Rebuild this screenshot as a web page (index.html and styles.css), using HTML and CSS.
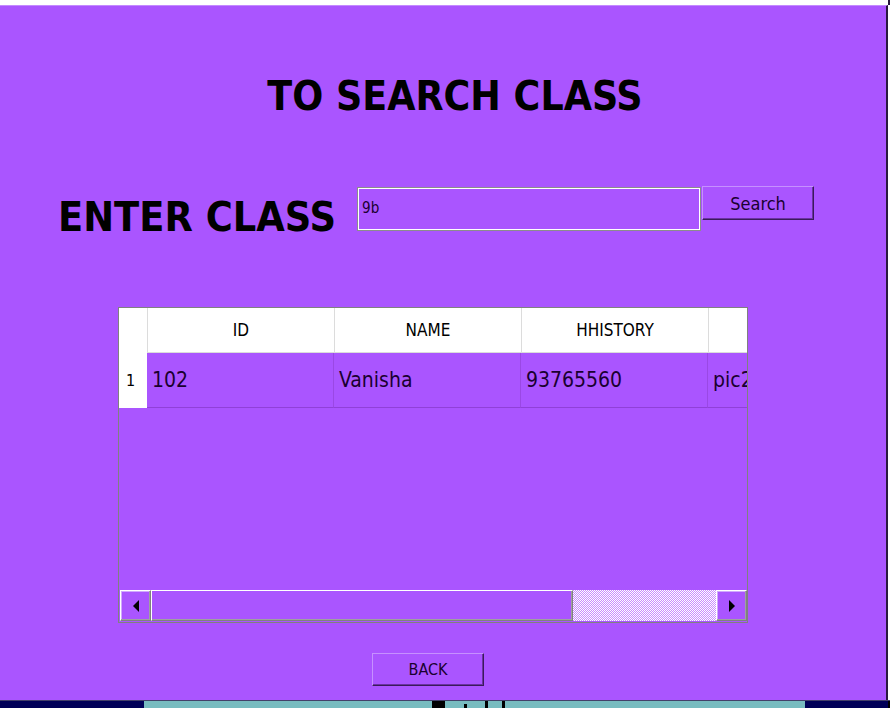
FILE: index.html
```html
<!DOCTYPE html>
<html>
<head>
<meta charset="utf-8">
<link rel="stylesheet" href="styles.css">
</head>
<body>
<div class="screen">
  <div class="topstrip"></div>
  <div class="window">
    <h1 class="title">TO SEARCH CLASS</h1>
    <div class="search-row">
      <label class="label">ENTER CLASS</label>
      <div class="input">9b</div>
      <button class="btn search-btn">Search</button>
    </div>
    <div class="table-frame">
      <div class="table-view">
        <div class="thead">
          <div class="corner"></div>
          <div class="th">ID</div>
          <div class="th">NAME</div>
          <div class="th">HHISTORY</div>
          <div class="th"></div>
        </div>
        <div class="trow">
          <div class="rownum">1</div>
          <div class="td">102</div>
          <div class="td">Vanisha</div>
          <div class="td">93765560</div>
          <div class="td">pic2</div>
        </div>
        <div class="empty">
          <div class="empty-gutter"></div>
        </div>
      </div>
      <div class="hscroll">
        <div class="sb-btn"><svg width="8" height="12" viewBox="0 0 8 12"><path d="M7 0 L1 6 L7 12 Z" fill="#000"/></svg></div>
        <div class="sb-thumb"></div>
        <div class="sb-track"></div>
        <div class="sb-btn"><svg width="8" height="12" viewBox="0 0 8 12"><path d="M1 0 L7 6 L1 12 Z" fill="#000"/></svg></div>
      </div>
    </div>
    <div class="back-row">
      <button class="btn back-btn">BACK</button>
    </div>
  </div>
  <div class="bottomstrip">
    <div class="navy left"></div>
    <div class="teal">
      <span class="mark m1"></span>
      <span class="mark m2"></span>
      <span class="mark m3"></span>
      <span class="mark m4"></span>
    </div>
    <div class="navy right"></div>
  </div>
</div>
</body>
</html>
```
FILE: styles.css
```css
html, body {
  margin: 0;
  padding: 0;
  background: #ffffff;
}
body {
  font-family: "DejaVu Sans Condensed", "DejaVu Sans", sans-serif;
  font-stretch: condensed;
  width: 890px;
  height: 708px;
  overflow: hidden;
}
.screen {
  display: flex;
  flex-direction: column;
  width: 890px;
  height: 708px;
}
.topstrip {
  height: 5px;
  background: #ffffff;
  border-right: 2px solid #2a1840;
  width: 888px;
}
.window {
  width: 888px;
  height: 695px;
  background: #aa55ff;
  border-top: 1px solid #c48aff;
  border-right: 2px solid #2a1840;
  display: flex;
  flex-direction: column;
  padding-top: 66px;
  box-sizing: border-box;
}
.title {
  margin: 0;
  font-size: 40.6px;
  line-height: 48px;
  font-weight: bold;
  text-align: center;
  padding-left: 24px;
  color: #000;
}
.search-row {
  display: flex;
  align-items: flex-start;
  margin-top: 66px;
  padding-left: 58px;
}
.label {
  font-size: 41px;
  line-height: 48px;
  font-weight: bold;
  margin-top: 7px;
  color: #000;
}
.input {
  margin-left: 21px;
  margin-top: 1px;
  width: 344px;
  height: 44px;
  box-sizing: border-box;
  border: 1px solid #8c8c8c;
  box-shadow: inset 0 0 0 1px #ffffff;
  font-size: 15px;
  padding-left: 4px;
  line-height: 40px;
  color: #1a0030;
}
.btn {
  font-family: "DejaVu Sans Condensed", "DejaVu Sans", sans-serif;
  font-stretch: condensed;
  background: #aa55ff;
  color: #1a0030;
  width: 112px;
  box-sizing: border-box;
  border: 1px solid;
  border-color: #c690ff #3a1a5a #3a1a5a #c690ff;
  box-shadow: inset -1px -1px 0 #6a32a0;
  padding: 0;
  cursor: default;
}
.search-btn {
  margin-left: 1px;
  height: 34px;
  font-size: 18px;
}
.table-frame {
  margin-left: 118px;
  margin-top: 66px;
  width: 630px;
  height: 316px;
  box-sizing: border-box;
  border: 1px solid #808080;
  display: flex;
  flex-direction: column;
}
.table-view {
  flex: 1;
  overflow: hidden;
  display: flex;
  flex-direction: column;
}
.thead, .trow {
  display: flex;
  flex: none;
}
.thead {
  height: 45px;
  background: #ffffff;
}
.corner, .rownum {
  width: 28px;
  flex: none;
  background: #ffffff;
}
.th {
  width: 187px;
  flex: none;
  box-sizing: border-box;
  border-left: 1px solid #dcdcdc;
  border-bottom: 1px solid #dcdcdc;
  text-align: center;
  line-height: 44px;
  font-size: 17px;
  color: #000;
}
.trow {
  height: 55px;
}
.rownum {
  font-size: 16px;
  line-height: 55px;
  padding-left: 7px;
  box-sizing: border-box;
  color: #000;
}
.td {
  width: 187px;
  flex: none;
  box-sizing: border-box;
  border-right: 1px solid #9a48e4;
  border-bottom: 1px solid #9040d8;
  font-size: 21px;
  line-height: 54px;
  padding-left: 5px;
  color: #1a0030;
  white-space: nowrap;
  overflow: hidden;
}
.empty {
  flex: 1;
  display: flex;
}
.empty-gutter {
  width: 1px;
  background: #aa55ff;
}
.hscroll {
  height: 32px;
  flex: none;
  display: flex;
  padding: 0 0 1px 1px;
  box-sizing: border-box;
}
.sb-btn {
  width: 31px;
  flex: none;
  box-sizing: border-box;
  border: 1px solid;
  border-color: #ffffff #808080 #808080 #ffffff;
  box-shadow: -1px -1px 0 #a0a0a0 inset, 1px 1px 0 #d0a8ff inset;
  display: flex;
  align-items: center;
  justify-content: center;
}
.sb-thumb {
  width: 422px;
  flex: none;
  box-sizing: border-box;
  border: 1px solid;
  border-color: #ffffff #808080 #808080 #ffffff;
  box-shadow: -1px -1px 0 #a0a0a0 inset;
}
.sb-track {
  flex: 1;
  background-color: #aa55ff;
  background-image: conic-gradient(#ffffff 0 25%, #c98cff 0 50%, #ffffff 0 75%, #c98cff 0);
  background-size: 2px 2px;
}
.back-row {
  display: flex;
  margin-top: 30px;
  padding-left: 372px;
}
.back-btn {
  height: 33px;
  font-size: 16px;
}
.bottomstrip {
  height: 8px;
  display: flex;
  border-top: 1px solid #44406a;
  box-sizing: border-box;
  width: 890px;
}
.navy {
  background: #000058;
}
.navy.left {
  width: 144px;
}
.navy.right {
  width: 83px;
  border-right: 2px solid #000;
}
.teal {
  width: 661px;
  background: #78bcc0;
  display: flex;
  align-items: flex-start;
}
.mark {
  display: block;
  height: 7px;
  background: #000;
}
.m1 { margin-left: 288px; width: 13px; }
.m2 { margin-left: 19px; width: 3px; height: 4px; margin-top: 3px; }
.m3 { margin-left: 18px; width: 3px; }
.m4 { margin-left: 14px; width: 3px; }
```
